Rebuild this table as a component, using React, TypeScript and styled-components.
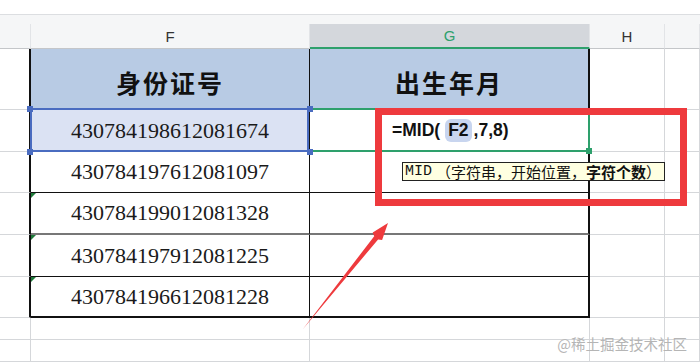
import styled, { createGlobalStyle, css } from 'styled-components';

const GlobalStyle = createGlobalStyle`
  html, body {
    margin: 0;
    padding: 0;
    background: #ffffff;
  }
  body {
    font-family: 'Liberation Sans', 'Noto Sans CJK SC', sans-serif;
    overflow: hidden;
  }
`;

const GRID = '#d5d7da';
const LINE = '#111111';
const GREEN = '#2ea06c';
const BLUE = '#4a6cc0';

const Sheet = styled.div`
  position: relative;
  width: 700px;
  height: 362px;
  overflow: hidden;
  background: #ffffff;
`;

const TopGap = styled.div`
  height: 14px;
  border-bottom: 1px solid #dcdee1;
`;

const Ribbon = styled.div`
  height: 9px;
  background: #f5f6f7;
`;

const Row = styled.div<{ $h: number }>`
  display: flex;
  height: ${(p) => p.$h}px;
`;

const widths = { stub: 31, f: 279, g: 280, h: 75, rest: 35 };
type Col = keyof typeof widths;

const ColLetter = styled.div<{ $col: Col; $active?: boolean }>`
  box-sizing: border-box;
  width: ${(p) => widths[p.$col]}px;
  flex-shrink: 0;
  display: flex;
  align-items: center;
  justify-content: center;
  font-size: 15px;
  color: ${(p) => (p.$active ? GREEN : '#333333')};
  background: ${(p) => (p.$active ? '#d4d7dc' : '#f5f6f7')};
  border-right: 1px solid #e2e4e7;
  border-bottom: ${(p) => (p.$active ? `2px solid ${GREEN}` : '1px solid #c4c6c9')};
`;

const GridCell = styled.div<{ $col: Col; $bottom?: string; $right?: string }>`
  box-sizing: border-box;
  width: ${(p) => widths[p.$col]}px;
  flex-shrink: 0;
  border-right: ${(p) => p.$right ?? `1px solid ${GRID}`};
  border-bottom: ${(p) => p.$bottom ?? `1px solid ${GRID}`};
`;

const TitleCell = styled.div<{ $col: Col; $bottom: string }>`
  box-sizing: border-box;
  width: ${(p) => widths[p.$col]}px;
  flex-shrink: 0;
  display: flex;
  align-items: center;
  justify-content: center;
  padding-top: 6px;
  background: #b8cbe4;
  font-family: 'Noto Sans CJK SC', sans-serif;
  font-weight: 700;
  font-size: 25px;
  letter-spacing: 2px;
  color: #111111;
  border-right: ${(p) => (p.$col === 'g' ? `2px solid ${LINE}` : `1px solid ${LINE}`)};
  border-bottom: ${(p) => p.$bottom};
`;

const IdCell = styled.div<{ $bottom: string; $selected?: boolean; $flag?: boolean }>`
  position: relative;
  box-sizing: border-box;
  width: ${widths.f}px;
  flex-shrink: 0;
  display: flex;
  align-items: center;
  justify-content: center;
  font-family: 'Liberation Serif', 'Times New Roman', serif;
  font-size: 22px;
  color: #1a1a1a;
  border-right: 1px solid ${LINE};
  border-bottom: ${(p) => p.$bottom};
  ${(p) =>
    p.$selected &&
    css`
      background: #dbe2f3;
      &::after {
        content: '';
        position: absolute;
        inset: -2px 0 -1px -1px;
        border: 2px solid ${BLUE};
        pointer-events: none;
      }
    `}
  ${(p) =>
    p.$flag &&
    css`
      &::before {
        content: '';
        position: absolute;
        left: 0;
        top: 0;
        border-top: 5px solid #1f7a3a;
        border-right: 5px solid transparent;
      }
    `}
`;

const Handle = styled.span<{ $x: 'left' | 'right'; $y: 'top' | 'bottom'; $color?: string }>`
  position: absolute;
  width: 6px;
  height: 6px;
  background: ${(p) => p.$color ?? BLUE};
  ${(p) => p.$x}: -4px;
  ${(p) => p.$y}: -4px;
  z-index: 2;
`;

const BirthCell = styled.div<{ $bottom: string; $active?: boolean }>`
  position: relative;
  box-sizing: border-box;
  width: ${widths.g}px;
  flex-shrink: 0;
  display: flex;
  align-items: center;
  padding-left: 82px;
  border-right: 2px solid ${(p) => (p.$active ? GREEN : LINE)};
  border-bottom: ${(p) => (p.$active ? `2px solid ${GREEN}` : p.$bottom)};
`;

const Formula = styled.div`
  font-family: 'Liberation Sans', Arial, sans-serif;
  font-weight: 700;
  font-size: 17.5px;
  color: #111111;
  white-space: nowrap;
`;

const RefChip = styled.span`
  display: inline-block;
  margin: 0 2px 0 5px;
  padding: 1px 3px;
  border-radius: 6px;
  background: #c8d5ef;
`;

const RedFrame = styled.div`
  position: absolute;
  left: 375px;
  top: 108px;
  width: 312px;
  height: 98px;
  box-sizing: border-box;
  border: 7px solid #ee3a3d;
  pointer-events: none;
`;

const Tooltip = styled.div`
  position: absolute;
  left: 402px;
  top: 162px;
  height: 19px;
  box-sizing: border-box;
  padding: 0 3px 0 2px;
  display: flex;
  align-items: center;
  background: #ffffe1;
  border: 1px solid #222222;
  font-family: 'Noto Sans CJK SC', sans-serif;
  font-size: 15px;
  line-height: 17px;
  color: #111111;
  white-space: nowrap;
`;

const Mono = styled.span`
  font-family: 'Liberation Mono', 'Courier New', monospace;
  font-size: 15px;
  margin-right: 4px;
`;

const Strong = styled.span`
  font-weight: 700;
`;

const Arrow = styled.svg`
  position: absolute;
  left: 0;
  top: 0;
  pointer-events: none;
`;

const Watermark = styled.div`
  position: absolute;
  right: 13px;
  top: 333px;
  font-family: 'Noto Sans CJK SC', sans-serif;
  font-size: 14.5px;
  color: #b5b5b5;
  white-space: nowrap;
`;

const ids = [
  '430784198612081674',
  '430784197612081097',
  '430784199012081328',
  '430784197912081225',
  '430784196612081228',
];
const rowHeights = [42, 41, 42, 42, 41];

const rowBottom = (i: number) => {
  if (i === ids.length - 1) return `2px solid ${LINE}`;
  if (i === 2) return '2px solid #777777';
  return `1px solid ${LINE}`;
};

export default function App() {
  return (
    <Sheet>
      <GlobalStyle />
      <TopGap />
      <Ribbon />
      <Row $h={25}>
        <ColLetter $col="stub" />
        <ColLetter $col="f">F</ColLetter>
        <ColLetter $col="g" $active>
          G
        </ColLetter>
        <ColLetter $col="h">H</ColLetter>
        <ColLetter $col="rest" />
      </Row>
      <Row $h={61}>
        <GridCell $col="stub" $right={`2px solid ${LINE}`} />
        <TitleCell $col="f" $bottom={`2px solid ${BLUE}`}>
          身份证号
        </TitleCell>
        <TitleCell $col="g" $bottom={`2px solid ${GREEN}`}>
          出生年月
        </TitleCell>
        <GridCell $col="h" />
        <GridCell $col="rest" />
      </Row>
      {ids.map((id, i) => (
        <Row $h={rowHeights[i]} key={id}>
          <GridCell $col="stub" $right={`2px solid ${LINE}`} />
          <IdCell $bottom={rowBottom(i)} $selected={i === 0} $flag={i >= 2}>
            {i === 0 && (
              <>
                <Handle $x="left" $y="top" />
                <Handle $x="right" $y="top" />
                <Handle $x="left" $y="bottom" />
                <Handle $x="right" $y="bottom" />
              </>
            )}
            {id}
          </IdCell>
          <BirthCell $bottom={rowBottom(i)} $active={i === 0}>
            {i === 0 && (
              <>
                <Formula>
                  =MID(<RefChip>F2</RefChip>,7,8)
                </Formula>
                <Handle $x="right" $y="bottom" $color={GREEN} />
              </>
            )}
          </BirthCell>
          <GridCell $col="h" />
          <GridCell $col="rest" />
        </Row>
      ))}
      {[22, 22].map((h, i) => (
        <Row $h={h} key={i}>
          <GridCell $col="stub" />
          <GridCell $col="f" />
          <GridCell $col="g" />
          <GridCell $col="h" />
          <GridCell $col="rest" />
        </Row>
      ))}

      <RedFrame />
      <Tooltip>
        <Mono>MID</Mono>（字符串，开始位置，<Strong>字符个数</Strong>）
      </Tooltip>
      <Arrow width="700" height="362" viewBox="0 0 700 362">
        <polygon
          points="303,329 374.2,236.2 372.7,232.5 388,223 382.1,240.1 378.1,239.4"
          fill="#ee3a3d"
        />
      </Arrow>
      <Watermark>@稀土掘金技术社区</Watermark>
    </Sheet>
  );
}
